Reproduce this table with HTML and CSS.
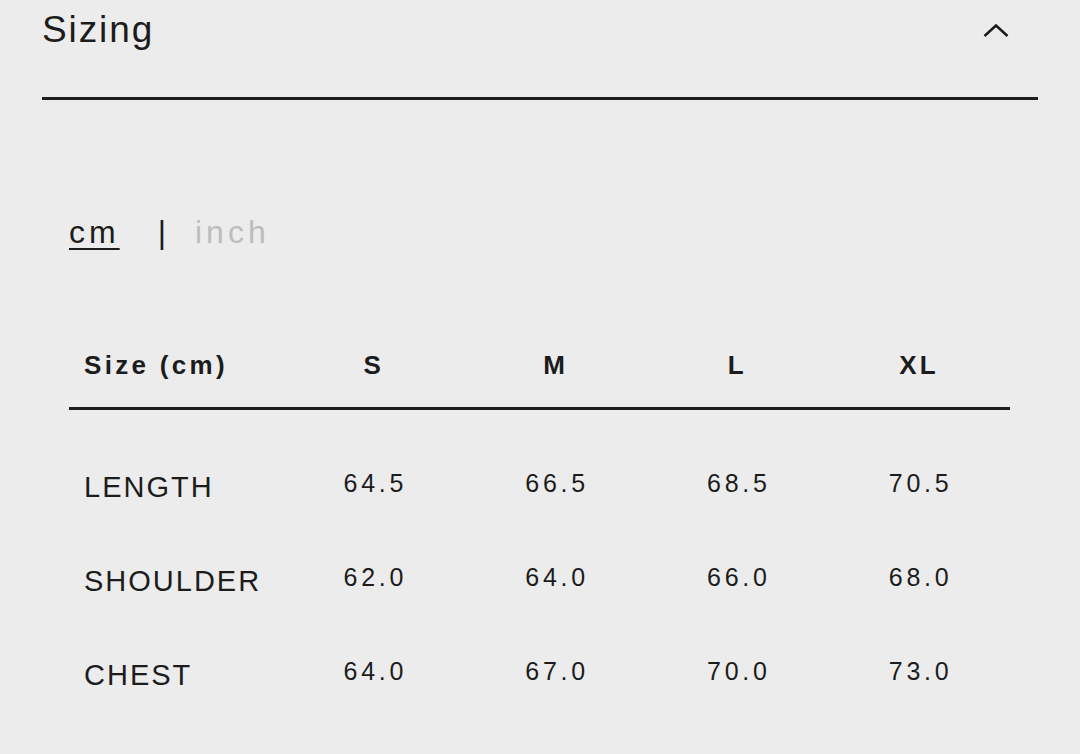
FILE: index.html
```html
<!DOCTYPE html>
<html lang="en">
<head>
<meta charset="utf-8">
<title>Sizing</title>
<link rel="stylesheet" href="styles.css">
</head>
<body>
<section class="panel">
  <div class="panel-head">
    <h2 class="panel-title">Sizing</h2>
    <svg class="chevron" width="28" height="16" viewBox="0 0 28 16" aria-hidden="true">
      <path d="M2.5 14 L14 3.5 L25.5 14" fill="none" stroke="#1a1a1a" stroke-width="2.5"/>
    </svg>
  </div>

  <div class="units">
    <span class="unit active">cm</span>
    <span class="sep">|</span>
    <span class="unit">inch</span>
  </div>

  <div class="size-table">
    <div class="row head">
      <div class="cell label">Size (cm)</div>
      <div class="cell">S</div>
      <div class="cell">M</div>
      <div class="cell">L</div>
      <div class="cell">XL</div>
    </div>
    <div class="body">
      <div class="row">
        <div class="cell label">LENGTH</div>
        <div class="cell num">64.5</div>
        <div class="cell num">66.5</div>
        <div class="cell num">68.5</div>
        <div class="cell num">70.5</div>
      </div>
      <div class="row">
        <div class="cell label">SHOULDER</div>
        <div class="cell num">62.0</div>
        <div class="cell num">64.0</div>
        <div class="cell num">66.0</div>
        <div class="cell num">68.0</div>
      </div>
      <div class="row">
        <div class="cell label">CHEST</div>
        <div class="cell num">64.0</div>
        <div class="cell num">67.0</div>
        <div class="cell num">70.0</div>
        <div class="cell num">73.0</div>
      </div>
    </div>
  </div>
</section>
</body>
</html>
```

FILE: styles.css
```css
html, body {
  margin: 0;
  padding: 0;
  background: #ececec;
}

body {
  font-family: "Liberation Sans", Arial, sans-serif;
  color: #1c1c1c;
  width: 1080px;
  height: 754px;
  overflow: hidden;
}

.panel {
  padding: 0 42px;
}

.panel-head {
  display: flex;
  justify-content: space-between;
  align-items: flex-start;
  height: 100px;
  box-sizing: border-box;
  border-bottom: 3px solid #1e1e1e;
}

.panel-title {
  margin: 0;
  padding-top: 8px;
  font-size: 37px;
  line-height: 44px;
  font-weight: 400;
  letter-spacing: 1.9px;
}

.chevron {
  display: block;
  margin-top: 22px;
  margin-right: 28px;
}

.units {
  margin-top: 112px;
  padding-left: 27px;
  height: 40px;
  display: flex;
  align-items: baseline;
  font-size: 32px;
  line-height: 40px;
  letter-spacing: 4px;
}

.unit {
  color: #bdbdbd;
}

.unit.active {
  color: #1c1c1c;
  text-decoration: underline;
  text-decoration-thickness: 2px;
  text-underline-offset: 5px;
}

.sep {
  color: #1c1c1c;
  margin-left: 38px;
  margin-right: 29px;
  letter-spacing: 0;
}

.size-table {
  margin-top: 71px;
  margin-left: 27px;
  width: 941px;
}

.row {
  display: grid;
  grid-template-columns: 214px repeat(4, 1fr);
  align-items: center;
  height: 94px;
}

.row.head {
  height: 84px;
  border-bottom: 3px solid #1e1e1e;
  font-size: 26px;
  font-weight: 700;
  letter-spacing: 3.3px;
}

.body {
  padding-top: 30px;
}

.cell {
  text-align: center;
}

.cell.label {
  text-align: left;
  padding-left: 15px;
}

.body .cell.label {
  font-size: 29px;
  letter-spacing: 2px;
}

.cell.num {
  font-size: 25px;
  letter-spacing: 3.8px;
  padding-bottom: 8px;
  padding-left: 3px;
}
```
